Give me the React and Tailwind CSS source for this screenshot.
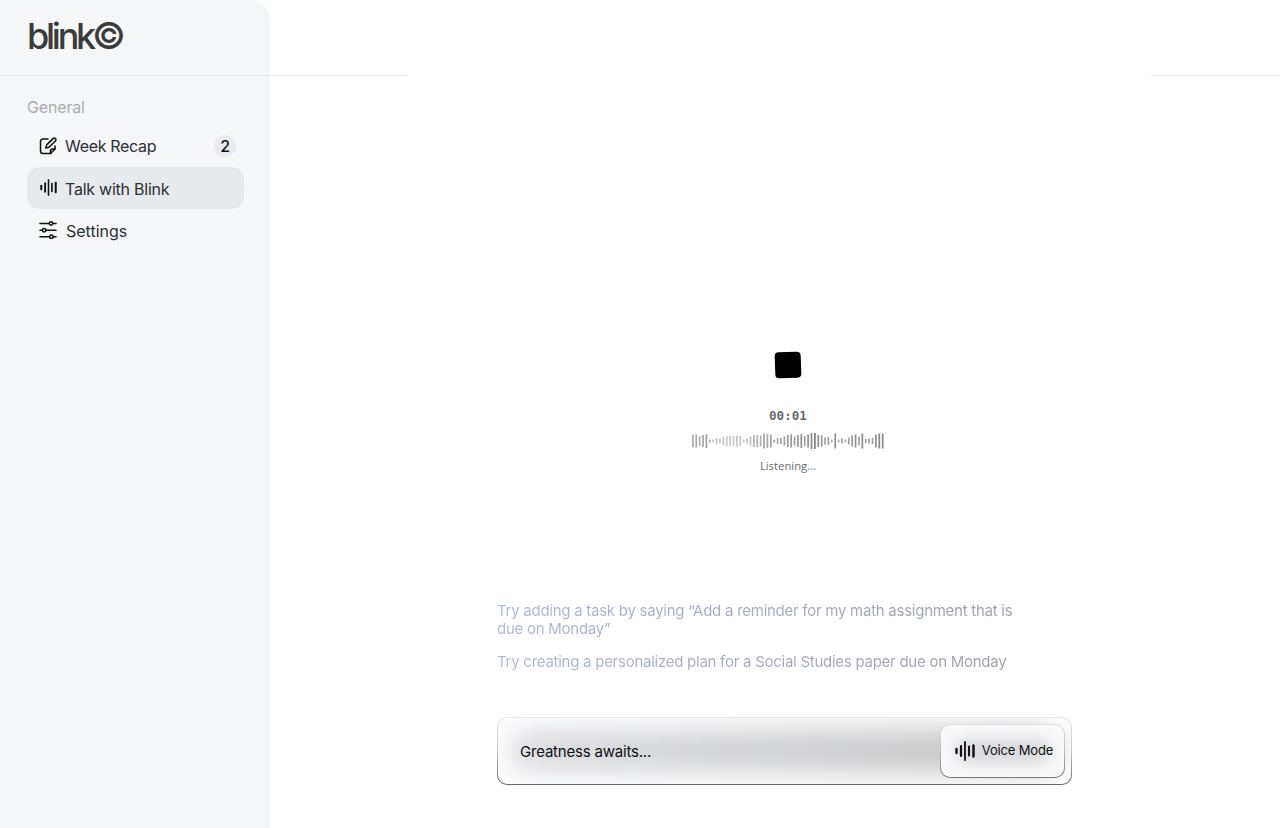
import React from 'react';

const BARS = [
  [13, '#a8a8a8'], [13, '#a8a8a8'], [10, '#b0b0b0'], [12, '#a8a8a8'], [14, '#a0a0a0'], [3, '#b4b4b4'], [3, '#c0c0c0'], [6, '#c0c0c0'],
  [5, '#c4c4c4'], [8, '#c4c4c4'], [10, '#c8c8c8'], [10, '#c8c8c8'], [10, '#c8c8c8'], [11, '#c4c4c4'], [10, '#c4c4c4'], [3, '#c4c4c4'],
  [5, '#c0c0c0'], [9, '#bcbcbc'], [12, '#b4b4b4'], [12, '#b4b4b4'], [11, '#b0b0b0'], [15, '#a0a0a0'], [14, '#a8a8a8'], [13, '#a0a0a0'],
  [3, '#a8a8a8'], [6, '#a8a8a8'], [6, '#a4a4a4'], [9, '#a0a0a0'], [12, '#989898'], [13, '#989898'], [9, '#a0a0a0'], [12, '#989898'],
  [14, '#909090'], [10, '#a0a0a0'], [13, '#909090'], [16, '#888888'], [16, '#808080'], [12, '#909090'], [11, '#989898'], [7, '#a0a0a0'],
  [8, '#a0a0a0'], [3, '#a8a8a8'], [15, '#909090'], [3, '#a8a8a8'], [5, '#a0a0a0'], [3, '#a8a8a8'], [7, '#a0a0a0'], [11, '#989898'],
  [13, '#909090'], [9, '#a0a0a0'], [15, '#888888'], [4, '#a0a0a0'], [5, '#a0a0a0'], [6, '#a0a0a0'], [13, '#909090'], [15, '#888888'],
  [15, '#888888'],
];

const VoiceIcon = ({ className }) => (
  <svg viewBox="0 0 20 20" fill="none" stroke="currentColor" strokeLinecap="round" className={className}>
    <path d="M1.500 8v4" strokeWidth="2.400" />
    <path d="M6 5v10" strokeWidth="2.200" />
    <path d="M10 1v18" strokeWidth="1.800" />
    <path d="M14 5.500v9" strokeWidth="2" />
    <path d="M18.500 4.500v11" strokeWidth="2.400" />
  </svg>
);

const RecapIcon = ({ className }) => (
  <svg viewBox="0 0 18 18" fill="none" stroke="currentColor" strokeWidth="1.500" strokeLinecap="round" strokeLinejoin="round" className={className}>
    <path d="M9 2H4a2.500 2.500 0 0 0-2.500 2.500v9.500A2.500 2.500 0 0 0 4 16.500h7.500L16 12V9" />
    <path d="M11.500 16.500V14a2 2 0 0 1 2-2H16" />
    <path d="M14 1.600a1.600 1.600 0 0 1 2.400 2.300L10 10.300l-3.200.8.800-3.200z" />
  </svg>
);

const SlidersIcon = ({ className }) => (
  <svg viewBox="0 0 18 18" fill="none" stroke="currentColor" strokeWidth="1.500" strokeLinecap="round" className={className}>
    <path d="M1 2.500h9M14 2.500h3" />
    <circle cx="12" cy="2.500" r="1.700" />
    <path d="M1 9.200h2.500M7 9.200h10" />
    <circle cx="5.200" cy="9.200" r="1.700" />
    <path d="M1 15.800h9.500M14.500 15.800h2.500" />
    <circle cx="12.500" cy="15.800" r="1.700" />
  </svg>
);

const Waveform = () => (
  <svg width="193" height="18" viewBox="0 0 193 18">
    {BARS.map(([h, color], i) => (
      <rect key={i} x={i * 3.39} y={9 - h / 2} width="1.700" height={h} fill={color} />
    ))}
  </svg>
);

const App = () => {
  return (
    <div className="flex h-[828px] w-[1280px] overflow-hidden bg-white font-['Inter',sans-serif]">
      {/* Sidebar */}
      <aside className="flex w-[270px] shrink-0 flex-col rounded-tr-[20px] bg-[#f5f6f8]">
        <div className="flex h-[76px] items-center border-b border-[#e5e7eb] pb-[4px] pl-[27px]">
          <span className="flex items-center text-[36px] font-medium leading-none tracking-[-0.09em] text-[#3b3b3b]">
            blink
            <span className="-ml-px text-[37px] font-medium leading-none tracking-normal">©</span>
          </span>
        </div>
        <div className="px-[27px] pt-[21px]">
          <p className="text-[16px] leading-[20px] tracking-[-0.01em] text-[#a9acb0]">General</p>
          <nav className="mt-[8px] flex w-[217px] flex-col text-[16px] tracking-[-0.02em] text-[#2b3036]">
            <a className="flex h-[42px] items-center pl-[12px] pr-[8px]">
              <RecapIcon className="h-[18px] w-[18px] text-[#111]" />
              <span className="ml-[8px]">Week Recap</span>
              <span className="ml-auto flex h-[22px] w-[22px] items-center justify-center rounded-full bg-[#e9ebee] text-[16px] font-medium text-[#111]">2</span>
            </a>
            <a className="flex h-[42px] items-center rounded-[12px] bg-[#e7eaec] pl-[13px]">
              <VoiceIcon className="h-[17px] w-[17px] -translate-y-[1px] text-[#111]" />
              <span className="ml-[8px] translate-y-[1px] tracking-[-0.015em]">Talk with Blink</span>
            </a>
            <a className="flex h-[44px] items-center pl-[12px]">
              <SlidersIcon className="h-[18px] w-[18px] -translate-y-[1px] text-[#111]" />
              <span className="ml-[9px] tracking-normal">Settings</span>
            </a>
          </nav>
        </div>
      </aside>

      {/* Main */}
      <main className="flex min-w-0 flex-1 flex-col">
        <div className="flex h-[76px] shrink-0">
          <div className="w-[137px] border-b border-[#e5e7eb]" />
          <div className="w-[744px]" />
          <div className="flex-1 border-b border-[#e5e7eb]" />
        </div>

        <div className="ml-[227px] flex w-[575px] flex-col">
          <div className="flex w-[582px] flex-col items-center pt-[276px]">
            <div className="h-[26px] w-[26px] -rotate-2 rounded-[4px] bg-black" />
            <div className="mt-[24px] h-px w-px bg-[#ddd]" />
            <p className="mt-[5px] font-['DejaVu_Sans_Mono',monospace] text-[12.6px] font-bold leading-[16px] text-[#6a6a6a]">00:01</p>
            <div className="mt-[8px] h-[18px]">
              <Waveform />
            </div>
            <p className="mt-[8px] font-['Open_Sans',sans-serif] text-[11.3px] leading-[16px] text-[#6b6b6b]">Listening...</p>
          </div>

          <div className="mt-[128px] flex w-[534px] flex-col gap-[15px] bg-gradient-to-r from-[#aeb7dc] to-[#9d9da6] bg-clip-text text-[15px] leading-[18px] tracking-[-0.26px] text-transparent">
            <p>Try adding a task by saying “Add a reminder for my math assignment that is due on Monday”</p>
            <p>Try creating a personalized plan for a Social Studies paper due on Monday</p>
          </div>

          {/* Input */}
          <div className="mt-[46px] h-[68px] rounded-[10px] bg-gradient-to-b from-[#e6e6e8] via-[#c4c4c6] to-[#666666] p-px">
            <div className="relative flex h-full items-center overflow-hidden rounded-[9px] bg-white pl-[22px] pr-[6px]">
              <div className="absolute bottom-[11px] left-[10px] right-[10px] top-[11px] rounded-full bg-gradient-to-r from-[#dcdde1] to-[#c2c2c2] blur-[14px]" />
              <span className="relative translate-y-[1px] text-[15px] tracking-[-0.2px] text-[#111]">Greatness awaits...</span>
              <div className="relative ml-auto h-[54px] w-[125px] rounded-[10px] bg-gradient-to-b from-[#e0e0e2] via-[#bcbcbe] to-[#777777] p-px">
                <button className="relative flex h-full w-full items-center justify-center gap-[7px] overflow-hidden rounded-[9px] bg-[#f9f9fa] pl-[3px] text-[13px] tracking-[-0.15px] text-[#111]">
                  <span className="absolute inset-x-[14px] inset-y-[14px] rounded-full bg-[#d6d7da] blur-[8px]" />
                  <VoiceIcon className="relative h-[20px] w-[20px]" />
                  <span className="relative">Voice Mode</span>
                </button>
              </div>
            </div>
          </div>
        </div>
      </main>
    </div>
  );
};

export default App;
